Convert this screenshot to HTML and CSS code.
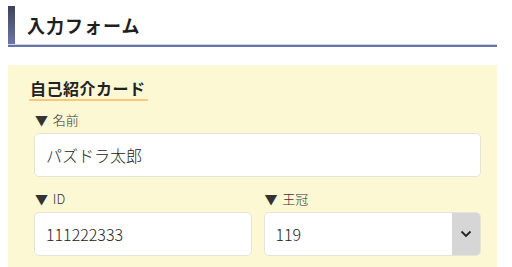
FILE: index.html
```html
<!DOCTYPE html>
<html lang="ja">
<head>
  <meta charset="UTF-8">
  <meta name="viewport" content="width=device-width, initial-scale=1.0">
  <title>入力フォーム</title>
  <link rel="stylesheet" href="styles.css">
</head>
<body>
  <div class="page">
    <h1 class="page-title">入力フォーム</h1>

    <div class="card-form">
      <h2 class="card-title"><span>自己紹介カード</span></h2>

      <div class="field">
        <label class="field-label" for="name">▼ 名前</label>
        <input class="field-input" id="name" type="text" value="パズドラ太郎">
      </div>

      <div class="field-row">
        <div class="field">
          <label class="field-label" for="player-id">▼ ID</label>
          <input class="field-input" id="player-id" type="text" value="111222333">
        </div>
        <div class="field">
          <label class="field-label" for="crown">▼ 王冠</label>
          <div class="select-wrap">
            <select class="field-select" id="crown">
              <option>119</option>
              <option>120</option>
            </select>
            <span class="select-arrow">
              <svg width="12" height="8" viewBox="0 0 12 8">
                <path d="M1.5 1.5 L6 6 L10.5 1.5" fill="none" stroke="#222" stroke-width="1.8"/>
              </svg>
            </span>
          </div>
        </div>
      </div>
    </div>
  </div>
</body>
</html>
```

FILE: styles.css
```css
body {
  font-family: "Noto Sans CJK JP", "Noto Sans", sans-serif;
  margin: 0;
  padding: 6px 8px 0;
  background-color: #ffffff;
  color: #222;
}

.page {
  width: 489px;
}

.page-title {
  margin: 0;
  height: 39px;
  padding-left: 19px;
  font-size: 18px;
  font-weight: bold;
  letter-spacing: 1px;
  line-height: 39px;
  color: #1f1f1f;
  background:
    linear-gradient(to bottom, #3e4258, #6c78ab) left top / 7px 100% no-repeat;
  border-bottom: 2px solid #6474ae;
  box-shadow: 0 -1px 0 #cdd1e2 inset;
}

.card-form {
  margin-top: 18px;
  padding: 12px 16px 11px 26px;
  background-color: #fcf8d4;
}

.card-title {
  margin: 0 0 11px -5px;
  font-size: 16px;
  font-weight: bold;
  letter-spacing: 0.5px;
  line-height: 22px;
}

.card-title span {
  display: inline-block;
  padding: 0 2px 0 1px;
  border-bottom: 2px solid #ffc77c;
}

.field {
  display: flex;
  flex-direction: column;
  flex: 1;
}

.field-label {
  font-size: 13px;
  font-weight: 300;
  line-height: 16px;
  color: #333;
  margin: 0 0 5px 1px;
  word-spacing: 2px;
}

.field-input,
.field-select {
  box-sizing: border-box;
  width: 100%;
  height: 44px;
  padding: 0 11px;
  font-family: inherit;
  font-size: 16px;
  font-weight: 300;
  color: #222;
  background-color: #ffffff;
  border: 1px solid #e6e4d6;
  border-radius: 5px;
  outline: none;
}

.field-row {
  display: flex;
  gap: 12px;
  margin-top: 14px;
}

.select-wrap {
  position: relative;
}

.field-select {
  appearance: none;
  -webkit-appearance: none;
  padding-right: 40px;
}

.select-arrow {
  position: absolute;
  top: 1px;
  right: 1px;
  bottom: 1px;
  width: 28px;
  display: flex;
  align-items: center;
  justify-content: center;
  background-color: #d6d6d6;
  border-radius: 0 4px 4px 0;
  pointer-events: none;
}
```
